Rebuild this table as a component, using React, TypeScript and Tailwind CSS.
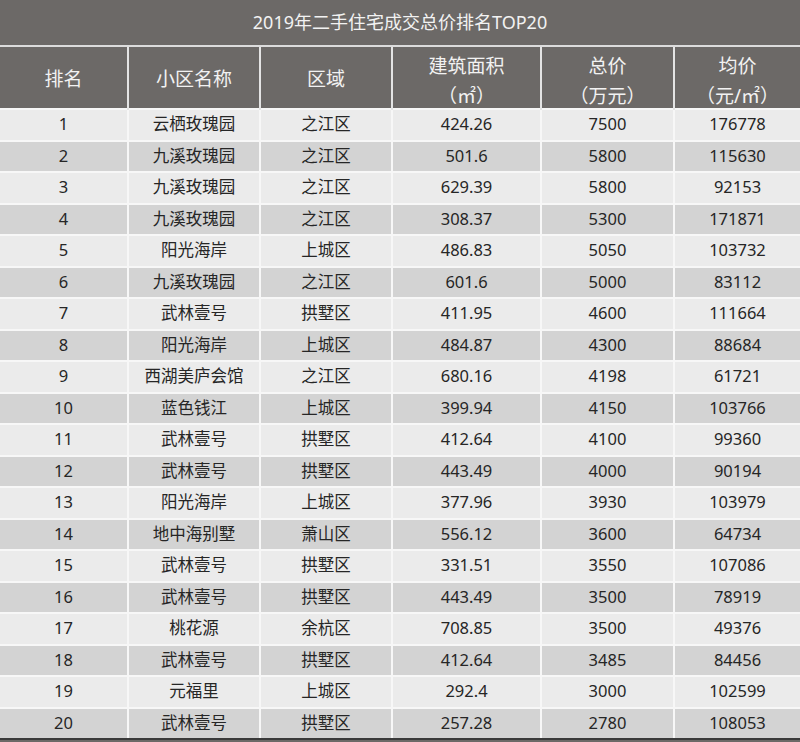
import React from 'react';

type Row = [number, string, string, string, string, string];

const rows: Row[] = [
  [1, '云栖玫瑰园', '之江区', '424.26', '7500', '176778'],
  [2, '九溪玫瑰园', '之江区', '501.6', '5800', '115630'],
  [3, '九溪玫瑰园', '之江区', '629.39', '5800', '92153'],
  [4, '九溪玫瑰园', '之江区', '308.37', '5300', '171871'],
  [5, '阳光海岸', '上城区', '486.83', '5050', '103732'],
  [6, '九溪玫瑰园', '之江区', '601.6', '5000', '83112'],
  [7, '武林壹号', '拱墅区', '411.95', '4600', '111664'],
  [8, '阳光海岸', '上城区', '484.87', '4300', '88684'],
  [9, '西湖美庐会馆', '之江区', '680.16', '4198', '61721'],
  [10, '蓝色钱江', '上城区', '399.94', '4150', '103766'],
  [11, '武林壹号', '拱墅区', '412.64', '4100', '99360'],
  [12, '武林壹号', '拱墅区', '443.49', '4000', '90194'],
  [13, '阳光海岸', '上城区', '377.96', '3930', '103979'],
  [14, '地中海别墅', '萧山区', '556.12', '3600', '64734'],
  [15, '武林壹号', '拱墅区', '331.51', '3550', '107086'],
  [16, '武林壹号', '拱墅区', '443.49', '3500', '78919'],
  [17, '桃花源', '余杭区', '708.85', '3500', '49376'],
  [18, '武林壹号', '拱墅区', '412.64', '3485', '84456'],
  [19, '元福里', '上城区', '292.4', '3000', '102599'],
  [20, '武林壹号', '拱墅区', '257.28', '2780', '108053'],
];

const cols = 'grid grid-cols-[127px_132px_132px_149px_133px_127px]';

export default function App() {
  return (
    <div
      className="w-[800px] h-[742px] bg-[#6c6967] overflow-hidden"
      style={{ fontFamily: '"Noto Sans", "Noto Sans CJK SC", sans-serif' }}
    >
      <div className="h-[47px] flex items-center justify-center text-[18px] text-[#f2f2f2] border-b-2 border-[#dcdcdc]">
        2019年二手住宅成交总价排名TOP20
      </div>

      <div className={`${cols} h-[61px] text-[19px] text-[#f2f2f2]`}>
        <div className="flex items-center justify-center">排名</div>
        <div className="flex items-center justify-center border-l-2 border-[#e4e4e4]">小区名称</div>
        <div className="flex items-center justify-center border-l-2 border-[#e4e4e4]">区域</div>
        <div className="flex flex-col items-center justify-center pt-[4px] leading-[30px] border-l-2 border-[#e4e4e4]">
          <span>建筑面积</span>
          <span>（㎡）</span>
        </div>
        <div className="flex flex-col items-center justify-center pt-[4px] leading-[30px] border-l-2 border-[#e4e4e4]">
          <span>总价</span>
          <span>（万元）</span>
        </div>
        <div className="flex flex-col items-center justify-center pt-[4px] leading-[30px] border-l-2 border-[#e4e4e4]">
          <span>均价</span>
          <span>（元/㎡）</span>
        </div>
      </div>

      <div>
        {rows.map((r, i) => (
          <div
            key={r[0]}
            className={`${cols} h-[31.5px] border-t-2 border-[#f7f7f7] text-[16.5px] text-[#262626] ${
              i % 2 === 0 ? 'bg-[#ebebeb]' : 'bg-[#d3d3d3]'
            }`}
          >
            {r.map((v, j) => (
              <div
                key={j}
                className={`flex items-center justify-center ${j > 0 ? 'border-l-2 border-[#f7f7f7]' : ''}`}
              >
                {v}
              </div>
            ))}
          </div>
        ))}
      </div>
      <div className="h-[2px] bg-[#3a3a3a]" />
    </div>
  );
}
